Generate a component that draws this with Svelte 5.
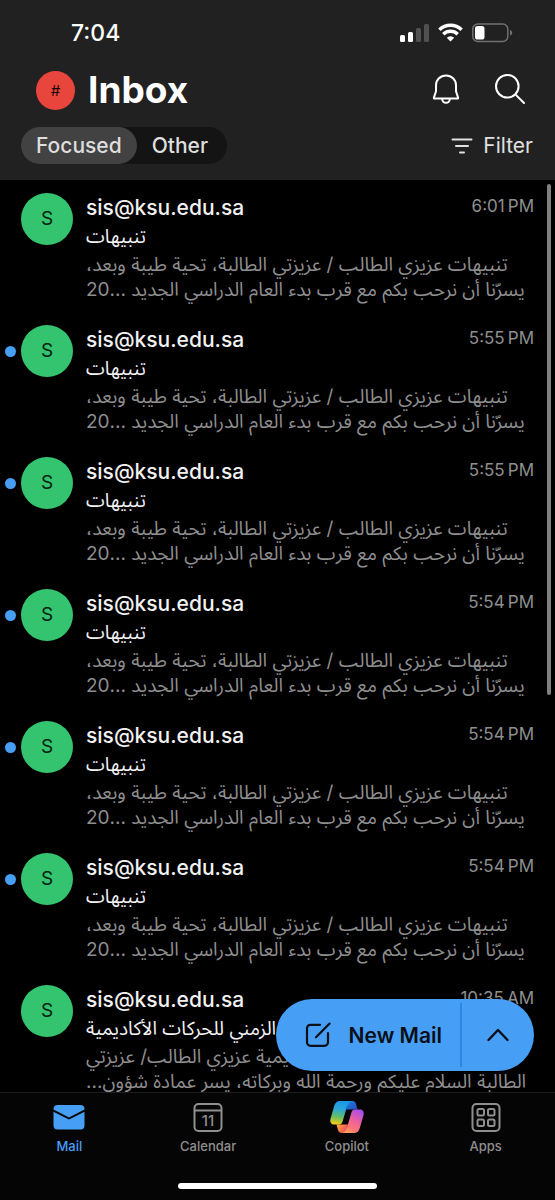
<script>
  const preview = [
    'تنبيهات عزيزي الطالب / عزيزتي الطالبة، تحية طيبة وبعد،',
    'يسرّنا أن نرحب بكم مع قرب بدء العام الدراسي الجديد ...20'
  ];
  const alert = (time, unread) => ({ time, unread, subject: 'تنبيهات', preview });
  const messages = [
    alert('6:01\u2009PM', false),
    alert('5:55\u2009PM', true),
    alert('5:55\u2009PM', true),
    alert('5:54\u2009PM', true),
    alert('5:54\u2009PM', true),
    alert('5:54\u2009PM', true),
    {
      time: '10:35\u2009AM',
      unread: false,
      subject: 'التقويم الزمني للحركات الأكاديمية',
      preview: [
        'التقويم الزمني للحركات الأكاديمية عزيزي الطالب/ عزيزتي',
        'الطالبة السلام عليكم ورحمة الله وبركاته، يسر عمادة شؤون...'
      ]
    }
  ];
  let focused = $state(true);
</script>

<div class="app">
  <header>
    <div class="status">
      <span class="clock">7:04</span>
      <div class="signals">
        <svg width="29" height="20" viewBox="0 0 29 20" aria-hidden="true">
          <rect x="0" y="12" width="5" height="7" rx="1.5" fill="#fff" />
          <rect x="8" y="9" width="5" height="10" rx="1.5" fill="#fff" />
          <rect x="16" y="5" width="5" height="14" rx="1.5" fill="#505050" />
          <rect x="24" y="1" width="5" height="18" rx="1.5" fill="#505050" />
        </svg>
        <svg width="25" height="20" viewBox="0 0 25 20" fill="none" stroke="#fff" stroke-width="3.4" aria-hidden="true">
          <path d="M1.400 6.800a15.700 15.700 0 0 1 22.200 0" />
          <path d="M5.300 11.300a10.200 10.200 0 0 1 14.400 0" />
          <path d="M12.500 18.500l-3.700-3.800a5.200 5.200 0 0 1 7.400 0z" fill="#fff" stroke="none" />
        </svg>
        <svg width="41" height="20" viewBox="0 0 41 20" aria-hidden="true">
          <rect x="0.8" y="1" width="35" height="17.5" rx="5" fill="none" stroke="#707070" stroke-width="1.5" />
          <rect x="3" y="3" width="9.5" height="13.5" rx="2.6" fill="#fff" />
          <path d="M38 7c1.6.6 2.2 1.6 2.2 2.800s-.6 2.200-2.200 2.800z" fill="#707070" />
        </svg>
      </div>
    </div>

    <div class="title">
      <button class="account" aria-label="Account">#</button>
      <h1>Inbox</h1>
      <button class="icon" aria-label="Notifications">
        <svg width="28" height="32" viewBox="0 0 28 32" fill="none" stroke="#fff" stroke-width="2" stroke-linejoin="round">
          <path d="M14 1.500C8.500 1.500 4 5.800 4 11.300v6L1.900 23.600c-.2.600.1 1 .7 1h22.800c.6 0 .9-.4.700-1L24 17.300v-6C24 5.800 19.500 1.500 14 1.500z" />
          <path d="M10.200 25a3.800 3.800 0 0 0 7.600 0" />
        </svg>
      </button>
      <button class="icon" aria-label="Search">
        <svg width="32" height="32" viewBox="0 0 32 32" fill="none" stroke="#fff" stroke-width="2" stroke-linecap="round">
          <circle cx="13.300" cy="12.300" r="11.300" />
          <path d="M21.600 20.600l8.400 8.400" />
        </svg>
      </button>
    </div>

    <div class="filters">
      <div class="segments">
        <button class:on={focused} aria-pressed={focused} onclick={() => (focused = true)}>Focused</button>
        <button class:on={!focused} aria-pressed={!focused} onclick={() => (focused = false)}>Other</button>
      </div>
      <button class="filter">
        <svg width="22" height="16" viewBox="0 0 22 16" fill="none" stroke="#e0e0e0" stroke-width="2" stroke-linecap="round" aria-hidden="true">
          <path d="M1.500 1.500h19M5 8h12M9 14.500h4" />
        </svg>
        Filter
      </button>
    </div>
  </header>

  <main>
    <ul>
      {#each messages as message}
        <li>
          <span class="dot" class:unread={message.unread}></span>
          <span class="avatar">S</span>
          <div class="body">
            <div class="top">
              <span class="sender">sis@ksu.edu.sa</span>
              <time>{message.time}</time>
            </div>
            <p class="subject" dir="rtl" lang="ar">{message.subject}</p>
            {#each message.preview as line}
              <p class="preview" dir="rtl" lang="ar">{line}</p>
            {/each}
          </div>
        </li>
      {/each}
    </ul>
    <div class="thumb"></div>
    <div class="compose">
      <button class="new">
        <svg width="26" height="26" viewBox="0 0 26 26" fill="none" stroke="#0a0f18" stroke-width="2.200" stroke-linecap="round" stroke-linejoin="round" aria-hidden="true">
          <path d="M15 2.800H5.500A3.500 3.500 0 0 0 2 6.300v14A3.500 3.500 0 0 0 5.500 23.800h14a3.500 3.500 0 0 0 3.500-3.500V11" />
          <path d="M11 15.300L24.600 1.600" />
        </svg>
        New Mail
      </button>
      <button class="more" aria-label="More options">
        <svg width="22" height="14" viewBox="0 0 22 14" fill="none" stroke="#0a0f18" stroke-width="2.400" stroke-linecap="round" stroke-linejoin="round">
          <path d="M1.500 12L11 2l9.500 10" />
        </svg>
      </button>
    </div>
  </main>

  <footer>
    <nav>
      <a href="#mail" class="current" aria-current="page">
        <svg width="34" height="34" viewBox="0 0 34 34" aria-hidden="true">
          <path d="M1.500 8.800A4 4 0 0 1 5.500 5h23a4 4 0 0 1 4 3.800v.8L17 17.400 1.500 9.600z" fill="#479ef5" />
          <path d="M1.500 11.800L17 19.600l15.500-7.800V25.500a4 4 0 0 1-4 4h-23a4 4 0 0 1-4-4z" fill="#479ef5" />
        </svg>
        Mail
      </a>
      <a href="#calendar">
        <svg width="34" height="34" viewBox="0 0 34 34" fill="none" stroke="#8f8f8f" stroke-width="2" aria-hidden="true">
          <rect x="3.500" y="4" width="27" height="27" rx="4" />
          <path d="M3.500 10.500h27" />
          <text x="17" y="26" text-anchor="middle" class="day">11</text>
        </svg>
        Calendar
      </a>
      <a href="#copilot">
        <svg width="36" height="34" viewBox="0 0 36 34" aria-hidden="true">
          <defs>
            <linearGradient id="cool" x1="0.500" y1="0" x2="0.350" y2="1">
              <stop offset="0" stop-color="#1b96ea" />
              <stop offset="0.350" stop-color="#2aa7d8" />
              <stop offset="0.680" stop-color="#65bd64" />
              <stop offset="1" stop-color="#f2cf16" />
            </linearGradient>
            <linearGradient id="warm" x1="0.800" y1="0" x2="0.300" y2="1">
              <stop offset="0" stop-color="#a64cf0" />
              <stop offset="0.450" stop-color="#ec5f9f" />
              <stop offset="0.800" stop-color="#ff7874" />
              <stop offset="1" stop-color="#ffa256" />
            </linearGradient>
            <linearGradient id="blue" x1="0" y1="0" x2="1" y2="1">
              <stop offset="0" stop-color="#1687e0" />
              <stop offset="1" stop-color="#2848c0" />
            </linearGradient>
            <linearGradient id="ember" x1="0" y1="0" x2="1" y2="0.600">
              <stop offset="0" stop-color="#ffb13a" />
              <stop offset="1" stop-color="#ee4660" />
            </linearGradient>
          </defs>
          <path d="M19 1h4.500c2 0 3 1.200 3.600 3.200L28.500 9.500H17z" fill="url(#blue)" />
          <path d="M17 33h-4.500c-2 0-3-1.200-3.600-3.200L7.500 24.500H19z" fill="url(#ember)" />
          <path d="M23.500 1H11C7.800 1 6 3 5.200 6L1.600 18.500C.7 22 2 24.500 5 24.500h5c2 0 3-1 3.600-3L17.500 8C18.600 4 20.500 1 23.500 1z" fill="url(#cool)" />
          <path d="M12.500 33H25c3.200 0 5-2 5.800-5l3.600-12.500c.9-3.500-.4-6-3.400-6h-5c-2 0-3 1-3.600 3L18.500 26c-1.100 4-3 7-6 7z" fill="url(#warm)" />
        </svg>
        Copilot
      </a>
      <a href="#apps">
        <svg width="34" height="34" viewBox="0 0 34 34" fill="none" stroke="#8f8f8f" stroke-width="2" aria-hidden="true">
          <rect x="3.500" y="4" width="27" height="27" rx="4" />
          <rect x="8.500" y="9" width="6.500" height="6.500" rx="1.500" />
          <rect x="19" y="9" width="6.500" height="6.500" rx="1.500" />
          <rect x="8.500" y="19.500" width="6.500" height="6.500" rx="1.500" />
          <rect x="19" y="19.500" width="6.500" height="6.500" rx="1.500" />
        </svg>
        Apps
      </a>
    </nav>
    <div class="home"></div>
  </footer>
</div>

<style>
  :global(body) {
    margin: 0;
    background: #000;
  }
  .app {
    display: flex;
    flex-direction: column;
    height: 100vh;
    overflow: hidden;
    background: #000;
    color: #fff;
    font-family: Inter, 'Noto Sans Arabic', 'Noto Sans', 'DejaVu Sans', sans-serif;
  }
  button {
    display: flex;
    align-items: center;
    justify-content: center;
    margin: 0;
    padding: 0;
    border: 0;
    background: none;
    color: inherit;
    font: inherit;
    cursor: pointer;
  }
  svg {
    display: block;
    flex: none;
  }
  header {
    flex: none;
    padding: 16px 22px 16px 21px;
    background: #212121;
  }
  .status {
    display: flex;
    align-items: center;
    justify-content: space-between;
    height: 34px;
    padding: 0 20px 0 50px;
  }
  .clock {
    font-size: 23px;
    font-weight: 500;
  }
  .signals {
    display: flex;
    gap: 9px;
  }
  .title {
    display: flex;
    align-items: center;
    gap: 34px;
    height: 48px;
    margin: 16px 0 13px;
    padding: 0 7px 0 15px;
  }
  .account {
    width: 39px;
    height: 39px;
    border-radius: 50%;
    background: #e8453c;
    color: #1a0808;
    font-size: 15px;
  }
  h1 {
    flex: 1;
    margin: 0 0 0 -21px;
    font-size: 37px;
    line-height: 48px;
    font-weight: 700;
  }
  .filters {
    display: flex;
    align-items: center;
    justify-content: space-between;
  }
  .segments {
    display: flex;
    border-radius: 19px;
    background: #141414;
    color: #dedede;
    font-size: 21px;
    font-weight: 500;
  }
  .segments button {
    height: 37px;
    padding: 0 19px 0 15px;
    border-radius: 19px;
  }
  .segments .on {
    padding: 0 15px;
    background: #424242;
  }
  .filter {
    gap: 10px;
    color: #e0e0e0;
    font-size: 21px;
  }
  main {
    position: relative;
    flex: 1;
    min-height: 0;
    overflow: hidden;
  }
  ul {
    margin: 0;
    padding: 0 21px 0 5px;
    list-style: none;
  }
  li {
    display: flex;
    height: 132px;
    padding-top: 13px;
    box-sizing: border-box;
  }
  .dot {
    flex: none;
    width: 11px;
    height: 11px;
    margin: 21px 5px 0 0;
    border-radius: 50%;
  }
  .unread {
    background: #479ef5;
  }
  .avatar {
    flex: none;
    width: 52px;
    height: 52px;
    border-radius: 50%;
    background: #34c46f;
    color: #06210f;
    font-size: 19px;
    line-height: 52px;
    text-align: center;
  }
  .body {
    flex: 1;
    min-width: 0;
    margin-left: 13px;
  }
  .top {
    display: flex;
    align-items: center;
    justify-content: space-between;
    height: 29px;
  }
  .sender {
    color: #f2f2f2;
    font-size: 21px;
    font-weight: 500;
  }
  time {
    color: #8f8f8f;
    font-size: 17px;
    line-height: 27px;
    align-self: flex-start;
  }
  p {
    margin: 0;
    white-space: nowrap;
    text-align: left;
  }
  .subject {
    width: fit-content;
    color: #f2f2f2;
    font-size: 19px;
    line-height: 30px;
  }
  .preview {
    color: #8f8f8f;
    font-size: 19px;
    line-height: 25px;
  }
  .thumb {
    position: absolute;
    top: 4px;
    right: 4px;
    width: 4px;
    height: 56%;
    border-radius: 2px;
    background: #808080;
  }
  .compose {
    position: absolute;
    right: 21px;
    bottom: 21px;
    display: flex;
    align-items: center;
    height: 72px;
    border-radius: 36px;
    background: #479ef5;
    color: #0a0f18;
  }
  .new {
    gap: 18px;
    padding: 0 18px 0 29px;
    font-size: 21px;
    font-weight: 600;
  }
  .more {
    height: 64px;
    padding: 0 25px;
    border-left: 2px solid #2b88e0;
  }
  footer {
    flex: none;
    border-top: 1px solid #1c1c1c;
    background: #050505;
  }
  nav {
    display: grid;
    grid-template-columns: repeat(4, 1fr);
    padding-top: 7px;
  }
  a {
    display: flex;
    flex-direction: column;
    align-items: center;
    gap: 2px;
    color: #8f8f8f;
    font-size: 13px;
    font-weight: 500;
    line-height: 20px;
    text-decoration: none;
  }
  .current {
    color: #479ef5;
  }
  .day {
    fill: #8f8f8f;
    stroke: none;
    font-size: 15px;
  }
  .home {
    width: 36%;
    height: 6px;
    margin: 27px auto 11px;
    border-radius: 3px;
    background: #fff;
  }
</style>
